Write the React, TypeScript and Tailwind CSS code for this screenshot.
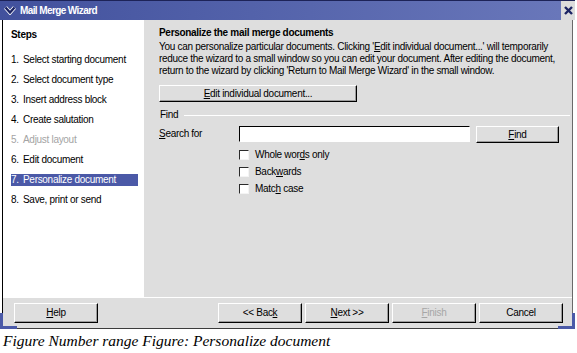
import React from "react";

const steps = [
  { n: "1.", label: "Select starting document" },
  { n: "2.", label: "Select document type" },
  { n: "3.", label: "Insert address block" },
  { n: "4.", label: "Create salutation" },
  { n: "5.", label: "Adjust layout", disabled: true },
  { n: "6.", label: "Edit document" },
  { n: "7.", label: "Personalize document", active: true },
  { n: "8.", label: "Save, print or send" },
];

const Btn = ({
  children,
  className = "",
  disabled = false,
}: {
  children: React.ReactNode;
  className?: string;
  disabled?: boolean;
}) => (
  <div
    className={
      "flex items-center justify-center bg-[#dedede] border border-t-white border-l-white border-b-black border-r-black shadow-[inset_-1px_-1px_0_#9c9c9c] " +
      (disabled ? "text-[#a6a6a6] " : "text-black ") +
      className
    }
  >
    {children}
  </div>
);

const U = ({ children }: { children: React.ReactNode }) => (
  <span className="underline underline-offset-[1px]">{children}</span>
);

const Check = ({ children }: { children: React.ReactNode }) => (
  <div className="flex items-center h-[17px]">
    <div className="w-[10px] h-[10px] bg-white border border-t-[#2a2a2a] border-l-[#2a2a2a] border-b-[#f4f4f4] border-r-[#f4f4f4]" />
    <span className="ml-[6px]">{children}</span>
  </div>
);

export default function App() {
  return (
    <div className="w-[577px] h-[353px] bg-white font-['Liberation_Sans',Arial,sans-serif] text-[10px] leading-[12px] tracking-[-0.3px] text-black overflow-hidden">
      <div className="relative w-[575px]">
        {/* Title bar */}
        <div className="flex h-[20px]">
          <div className="flex-1 flex items-center border-t border-[#1d2358] bg-gradient-to-r from-[#42519d] to-[#6977ba]">
            <svg width="12" height="9" viewBox="0 0 12 9" className="ml-[4px]">
              <polyline points="1.5,1.5 6,6.5 10.5,1.5" fill="none" stroke="#ffffff" strokeWidth="4" />
              <polyline points="1.5,1.5 6,6.5 10.5,1.5" fill="none" stroke="#1b2363" strokeWidth="2.4" />
            </svg>
            <span className="ml-[4px] font-bold text-white text-[10px] tracking-[-0.6px]">
              Mail Merge Wizard
            </span>
          </div>
          <div className="w-[14px] flex items-center justify-center bg-[#dcdcdc] border-t border-[#1d2358]">
            <svg width="9" height="9" viewBox="0 0 9 9">
              <path d="M1 1 L8 8 M8 1 L1 8" stroke="#1b2363" strokeWidth="2.4" />
            </svg>
          </div>
        </div>

        {/* Body */}
        <div className="ml-[2px] w-[571px] flex flex-col border-l border-r border-b border-l-black border-r-[#6a6a6a] border-b-[#3c3c3c]">
          <div className="flex h-[277px]">
            {/* Steps */}
            <div className="w-[141px] bg-white pl-[8px] pt-[9px]">
              <div className="font-bold h-[12px]">Steps</div>
              <div className="mt-[9px]">
                {steps.map((s) => (
                  <div key={s.n} className="h-[20px] flex items-center">
                    <div
                      className={
                        "flex w-[127px] h-[12px] items-center " +
                        (s.active
                          ? "bg-[#4b59a7] text-white"
                          : s.disabled
                          ? "text-[#a4a4a4]"
                          : "text-black")
                      }
                    >
                      <span className="w-[12px]">{s.n}</span>
                      <span>{s.label}</span>
                    </div>
                  </div>
                ))}
              </div>
            </div>

            {/* Page */}
            <div className="flex-1 bg-[#dedede] pl-[15px] pt-[7px]">
              <div className="font-bold h-[12px]">Personalize the mail merge documents</div>
              <p className="mt-[2px] whitespace-nowrap">
                You can personalize particular documents. Clicking '<U>E</U>dit individual document...' will temporarily
                <br />
                reduce the wizard to a small window so you can edit your document. After editing the document,
                <br />
                return to the wizard by clicking 'Return to Mail Merge Wizard' in the small window.
              </p>
              <Btn className="mt-[8px] w-[198px] h-[17px]">
                <span>
                  <U>E</U>dit individual document...
                </span>
              </Btn>
              <div className="mt-[7px] flex items-center h-[12px] pr-[2px]">
                <span className="ml-[1px]">Find</span>
                <div className="flex-1 ml-[6px] h-px bg-white" />
              </div>
              <div className="mt-[5px] flex items-start">
                <span className="w-[80px] leading-[16px]">
                  <U>S</U>earch for
                </span>
                <div className="w-[231px] h-[16px] bg-white border border-t-black border-l-black border-b-white border-r-white" />
                <Btn className="ml-[6px] w-[83px] h-[17px]">
                  <span>
                    <U>F</U>ind
                  </span>
                </Btn>
              </div>
              <div className="mt-[3px] pl-[80px]">
                <Check>
                  Whole wor<U>d</U>s only
                </Check>
                <Check>
                  Back<U>w</U>ards
                </Check>
                <Check>
                  Matc<U>h</U> case
                </Check>
              </div>
            </div>
          </div>

          {/* Buttons */}
          <div className="h-[31px] bg-[#dedede] border-t border-white flex items-start pt-[5px] pl-[11px]">
            <Btn className="w-[84px] h-[20px]">
              <span>
                <U>H</U>elp
              </span>
            </Btn>
            <div className="ml-[120px] flex gap-[3px]">
              <Btn className="w-[84px] h-[20px]">
                <span>
                  &lt;&lt; Bac<U>k</U>
                </span>
              </Btn>
              <Btn className="w-[84px] h-[20px]">
                <span>
                  <U>N</U>ext &gt;&gt;
                </span>
              </Btn>
              <Btn className="w-[84px] h-[20px]" disabled>
                <span>
                  <U>F</U>inish
                </span>
              </Btn>
              <Btn className="w-[84px] h-[20px]">
                <span>Cancel</span>
              </Btn>
            </div>
          </div>
        </div>

        {/* resize corners */}
        <div className="absolute left-0 bottom-0 w-[17px] h-[16px] border-l-[3px] border-b-[3px] border-[#4b5aa8]" />
        <div className="absolute right-0 bottom-0 w-[17px] h-[16px] border-r-[3px] border-b-[3px] border-[#4b5aa8]" />
      </div>

      <div className="mt-[2px] pl-[3px] font-['Liberation_Serif','Times_New_Roman',serif] italic text-[15.5px] leading-[20px] tracking-normal">
        Figure Number range Figure: Personalize document
      </div>
    </div>
  );
}
